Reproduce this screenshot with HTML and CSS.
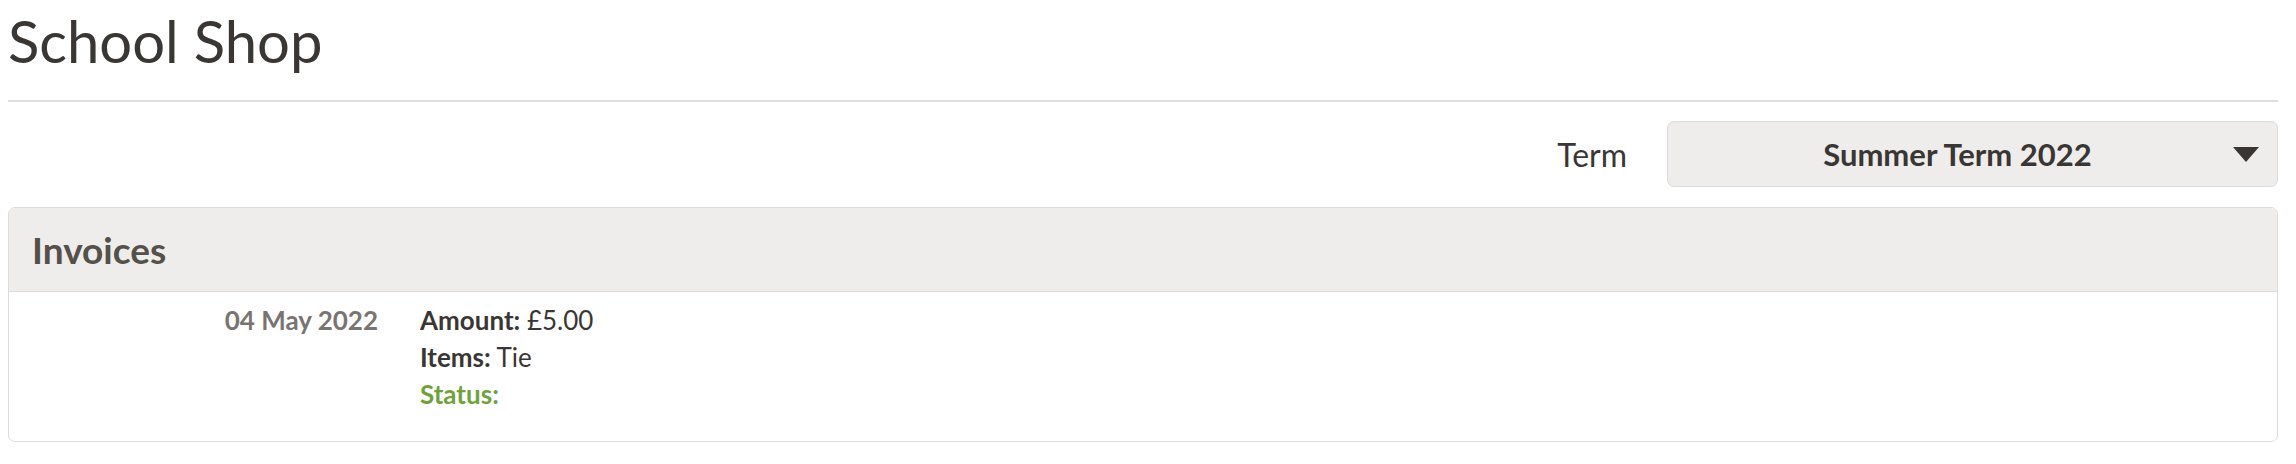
FILE: index.html
```html
<!DOCTYPE html>
<html lang="en">
<head>
  <meta charset="UTF-8">
  <title>School Shop</title>
  <link rel="stylesheet" href="styles.css">
</head>
<body>
  <div class="page">
    <h1 class="page-title">School Shop</h1>

    <div class="term-row">
      <label class="term-label" for="term">Term</label>
      <div class="term-select" id="term">
        <span class="term-value">Summer Term 2022</span>
        <svg class="term-arrow" width="26" height="15" viewBox="0 0 26 15">
          <path d="M0 0 H26 L13 15 Z" fill="#3a3633"/>
        </svg>
      </div>
    </div>

    <div class="panel">
      <div class="panel-head">Invoices</div>
      <div class="panel-body">
        <div class="invoice">
          <div class="invoice-date">04 May 2022</div>
          <div class="invoice-info">
            <div><b>Amount:</b> £5.00</div>
            <div><b>Items:</b> Tie</div>
            <div class="status"><b>Status:</b></div>
          </div>
        </div>
      </div>
    </div>
  </div>
</body>
</html>
```

FILE: styles.css
```css
/* Global */
body {
  margin: 0;
  font-family: Lato, "Open Sans", sans-serif;
  color: #3a3633;
  background: #fff;
}

.page {
  width: 2270px;
  margin-left: 8px;
}

/* Title */
.page-title {
  margin: 0;
  padding-top: 5px;
  font-size: 58px;
  font-weight: 400;
  line-height: 72px;
  height: 95px;
  border-bottom: 2px solid #dddcda;
  box-sizing: content-box;
}

/* Term picker */
.term-row {
  display: flex;
  justify-content: flex-end;
  align-items: center;
  gap: 40px;
  margin-top: 19px;
}

.term-label {
  font-size: 32px;
}

.term-select {
  width: 611px;
  height: 66px;
  box-sizing: border-box;
  display: flex;
  align-items: center;
  gap: 6px;
  padding: 0 18px 0 20px;
  background: #eeedeb;
  border: 1px solid #dcdbd9;
  border-radius: 7px;
}

.term-value {
  flex: 1;
  text-align: center;
  font-size: 31px;
  font-weight: 700;
}

/* Invoices panel */
.panel {
  margin-top: 20px;
  border: 1px solid #dcdbd9;
  border-radius: 7px;
  overflow: hidden;
}

.panel-head {
  height: 84px;
  box-sizing: border-box;
  display: flex;
  align-items: center;
  padding-left: 23px;
  background: #eeedeb;
  border-bottom: 1px solid #dcdbd9;
  color: #555049;
  font-size: 37px;
  font-weight: 700;
}

.panel-body {
  padding: 10px 0 28px;
}

.invoice {
  display: flex;
  gap: 42px;
  font-size: 26px;
  line-height: 37px;
}

.invoice-date {
  width: 369px;
  text-align: right;
  color: #7a7470;
  font-weight: 700;
}

.status {
  color: #6fa33a;
}
```
